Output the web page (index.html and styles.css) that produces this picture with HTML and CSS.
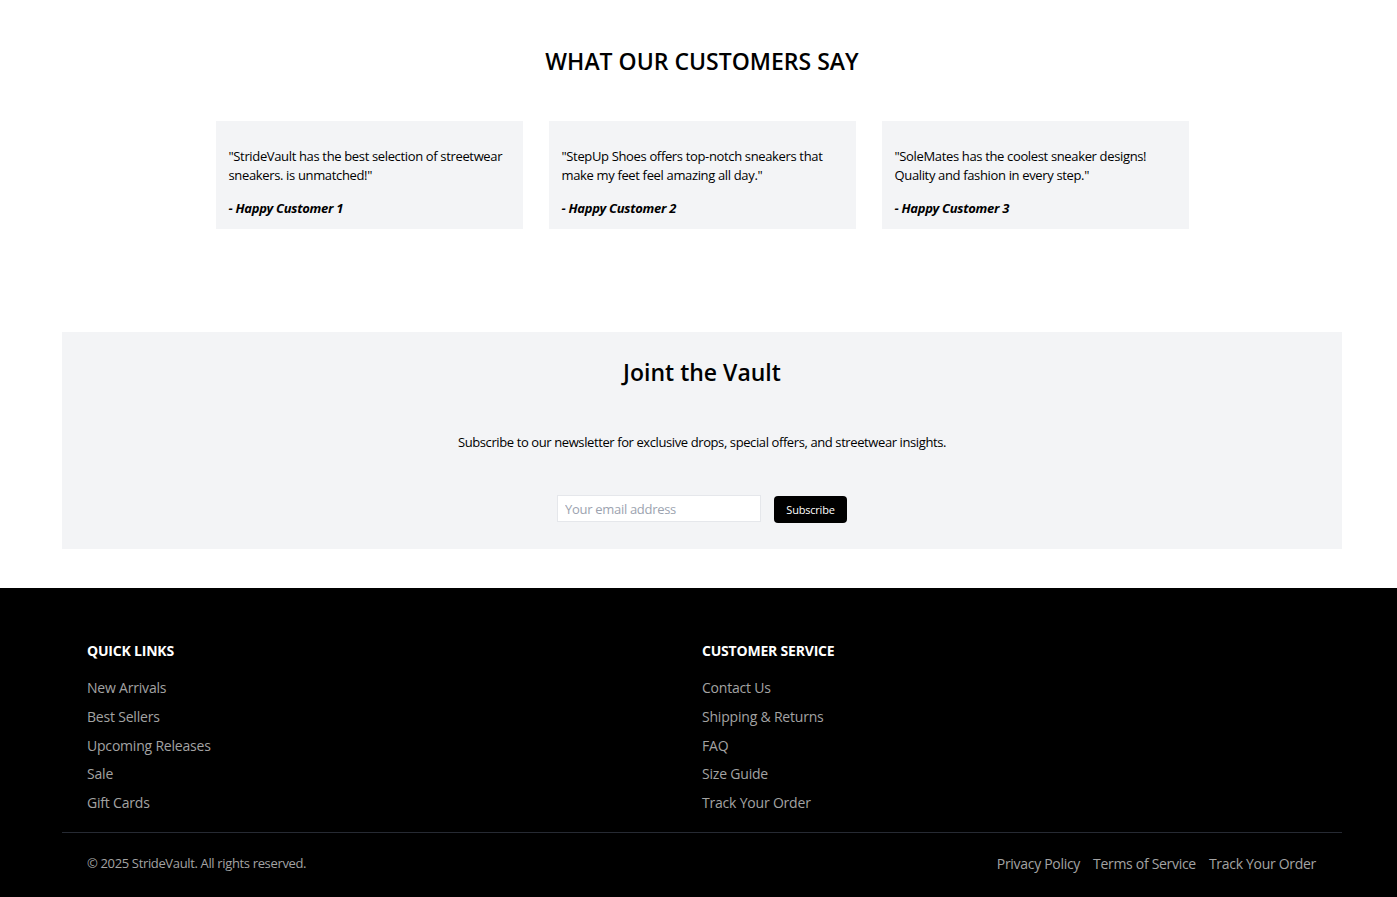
FILE: index.html
```html
<!DOCTYPE html>
<html lang="en">
<head>
    <meta charset="UTF-8">
    <meta name="viewport" content="width=device-width, initial-scale=1.0">
    <title>StrideVault</title>
    <link rel="stylesheet" href="styles.css">
</head>
<body>
    <section class="testimonials">
        <h2>WHAT OUR CUSTOMERS SAY</h2>
        <div class="testimonial-grid">
            <div class="testimonial">
                <p class="quote">"StrideVault has the best selection of streetwear sneakers. is unmatched!"</p>
                <p class="author">- Happy Customer 1</p>
            </div>
            <div class="testimonial">
                <p class="quote">"StepUp Shoes offers top-notch sneakers that make my feet feel amazing all day."</p>
                <p class="author">- Happy Customer 2</p>
            </div>
            <div class="testimonial">
                <p class="quote">"SoleMates has the coolest sneaker designs! Quality and fashion in every step."</p>
                <p class="author">- Happy Customer 3</p>
            </div>
        </div>
    </section>

    <section class="wrap newsletter">
        <h2>Joint the Vault</h2>
        <p>Subscribe to our newsletter for exclusive drops, special offers, and streetwear insights.</p>
        <form class="subscribe-form" onsubmit="return false;">
            <input type="email" placeholder="Your email address">
            <button type="submit">Subscribe</button>
        </form>
    </section>

    <footer class="footer">
        <div class="wrap">
            <div class="footer-cols">
                <div class="footer-col">
                    <h3>QUICK LINKS</h3>
                    <ul>
                        <li><a href="#">New Arrivals</a></li>
                        <li><a href="#">Best Sellers</a></li>
                        <li><a href="#">Upcoming Releases</a></li>
                        <li><a href="#">Sale</a></li>
                        <li><a href="#">Gift Cards</a></li>
                    </ul>
                </div>
                <div class="footer-col">
                    <h3>CUSTOMER SERVICE</h3>
                    <ul>
                        <li><a href="#">Contact Us</a></li>
                        <li><a href="#">Shipping &amp; Returns</a></li>
                        <li><a href="#">FAQ</a></li>
                        <li><a href="#">Size Guide</a></li>
                        <li><a href="#">Track Your Order</a></li>
                    </ul>
                </div>
            </div>
            <div class="footer-bottom">
                <span class="copyright">&copy; 2025 StrideVault. All rights reserved.</span>
                <nav class="legal">
                    <a href="#">Privacy Policy</a>
                    <a href="#">Terms of Service</a>
                    <a href="#">Track Your Order</a>
                </nav>
            </div>
        </div>
    </footer>
</body>
</html>
```

FILE: styles.css
```css
body {
    font-family: "Open Sans", "Noto Sans", sans-serif;
    margin: 0;
    padding: 0 0 0 7px;
    background-color: #fff;
    color: #000;
}
.wrap {
    max-width: 1280px;
    margin: 0 auto;
}
.testimonials {
    padding: 45px 0 0;
    text-align: center;
}
.testimonials h2 {
    font-size: 23px;
    font-weight: 600;
    line-height: 32px;
    margin: 0 0 44px;
}
.testimonial-grid {
    display: grid;
    grid-template-columns: repeat(3, 307px);
    gap: 26px;
    justify-content: center;
    text-align: left;
}
.testimonial {
    background-color: #f3f4f6;
    padding: 26px 13px 11px;
}
.testimonial p {
    margin: 0;
    font-size: 13px;
    line-height: 19px;
    letter-spacing: -0.35px;
}
.testimonial .quote {
    margin-bottom: 13px;
}
.testimonial .author {
    font-weight: 700;
    font-style: italic;
    line-height: 20px;
    letter-spacing: -0.3px;
}
.newsletter {
    margin-top: 103px;
    background-color: #f3f4f6;
    text-align: center;
    padding: 24px 0 26px;
}
.newsletter h2 {
    font-size: 23px;
    font-weight: 600;
    line-height: 32px;
    margin: 0 0 44px;
}
.newsletter p {
    font-size: 13px;
    line-height: 20px;
    letter-spacing: -0.4px;
    margin: 0 0 42px;
}
.subscribe-form {
    display: flex;
    justify-content: center;
    align-items: center;
    gap: 13px;
}
.subscribe-form input {
    width: 204px;
    height: 27px;
    box-sizing: border-box;
    border: 1px solid #e5e7eb;
    background: #fff;
    padding: 0 7px;
    font-family: inherit;
    font-size: 13px;
    letter-spacing: -0.3px;
    color: #000;
    outline: none;
}
.subscribe-form input::placeholder {
    color: #9ca3af;
}
.subscribe-form button {
    width: 73px;
    height: 27px;
    border: none;
    border-radius: 4px;
    background-color: #000;
    color: #fff;
    font-family: inherit;
    font-size: 11px;
    letter-spacing: -0.2px;
    cursor: pointer;
    margin-top: 2px;
}
.footer {
    background-color: #000;
    margin: 39px 0 0 -7px;
    padding: 0 0 0 7px;
    color: #fff;
}
.footer .wrap {
    padding-top: 53px;
}
.footer-cols {
    display: grid;
    grid-template-columns: 1fr 1fr;
    padding: 0 25px 10px;
}
.footer-col h3 {
    font-size: 14px;
    font-weight: 700;
    line-height: 20px;
    letter-spacing: -0.2px;
    margin: 0 0 17px;
}
.footer-col ul {
    list-style: none;
    margin: 0;
    padding: 0;
}
.footer-col li {
    font-size: 14px;
    line-height: 20px;
    letter-spacing: -0.2px;
    margin-bottom: 8.75px;
}
.footer a {
    color: #a3a3a3;
    text-decoration: none;
}
.footer-bottom {
    border-top: 1px solid #262a33;
    display: flex;
    justify-content: space-between;
    align-items: center;
    padding: 21px 26px 24px 25px;
}
.copyright {
    font-size: 13px;
    letter-spacing: -0.35px;
    color: #a3a3a3;
}
.legal {
    display: flex;
    gap: 13px;
    font-size: 14px;
    letter-spacing: -0.3px;
}
```
